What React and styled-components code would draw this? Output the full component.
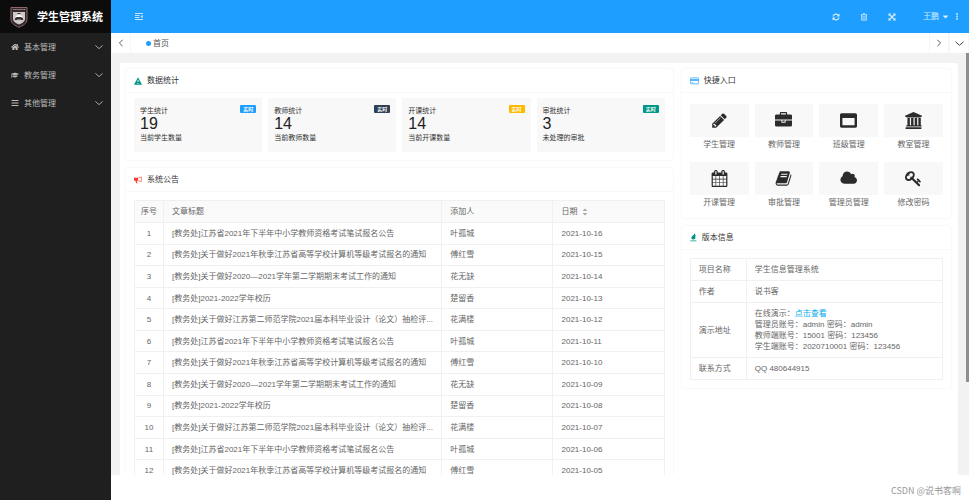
import React from "react"
import styled, {createGlobalStyle} from "styled-components"
import {
    FaBars,
    FaCaretDown,
    FaGraduationCap,
    FaHome,
} from "react-icons/fa"

const colors = {
    blue: "#1e9fff",
    side: "#1f1f1f",
    dark: "#2f4056",
    green: "#009688",
    yellow: "#ffb800",
    red: "#ff3b30",
    text: "#666",
    line: "#f0f0f0",
    tile: "#f8f8f8",
    page: "#f2f2f2",
}

const GlobalStyle = createGlobalStyle`
    * {
        box-sizing: border-box;
    }

    body {
        margin: 0;
        background: #fff;
        color: ${colors.text};
        font: 8px/11px "Liberation Sans", "Noto Sans CJK SC", sans-serif;
    }

    h1, h2, p, ul {
        margin: 0;
        padding: 0;
        font: inherit;
    }

    svg {
        display: block;
        flex: none;
    }

    button {
        padding: 0;
        border: none;
        background: none;
        color: inherit;
        font: inherit;
        cursor: pointer;
    }
`

const Shell = styled.div`
    display: flex;
    height: 100vh;
    overflow: hidden;
`

const Sidebar = styled.aside`
    flex: none;
    width: 111px;
    background: ${colors.side};
    color: #bbb;
`

const Brand = styled.div`
    display: flex;
    align-items: center;
    gap: 9px;
    height: 33px;
    padding-left: 10px;
    background: #0c0c0c;
    color: #fff;

    h1 {
        font-size: 11px;
        font-weight: 700;
        line-height: 16px;
        white-space: nowrap;
    }
`

const MenuItem = styled.button`
    display: flex;
    align-items: center;
    gap: 5px;
    width: 100%;
    height: 28px;
    padding: 0 8px 0 11px;
    text-align: left;

    span {
        flex: 1;
    }
`

const Main = styled.div`
    display: flex;
    flex: 1;
    flex-direction: column;
    min-width: 0;
`

const TopBar = styled.header`
    display: flex;
    flex: none;
    align-items: center;
    justify-content: space-between;
    height: 33px;
    padding: 0 5px 0 14px;
    background: ${colors.blue};
    color: #d5edff;
`

const Tools = styled.div`
    display: flex;
    align-items: center;
`

const ToolButton = styled.button`
    display: flex;
    align-items: center;
    justify-content: center;
    width: 28px;
    height: 33px;
`

const UserButton = styled(ToolButton)`
    justify-content: flex-end;
    gap: 2px;
    width: 44px;
`

const MoreButton = styled(ToolButton)`
    width: 14px;
`

const TabBar = styled.nav`
    display: flex;
    flex: none;
    align-items: stretch;
    height: 20px;
    color: #555;
`

const TabArrow = styled.button`
    display: flex;
    align-items: center;
    justify-content: center;
    width: 20px;
    border: solid #f6f6f6;
    border-width: 0 1px;
    color: #444;
`

const Tab = styled.a`
    display: flex;
    flex: 1;
    align-items: center;
    gap: 2px;
    padding-left: 15px;
    color: inherit;
    text-decoration: none;

    &::before {
        content: "";
        width: 5px;
        height: 5px;
        border-radius: 50%;
        background: ${colors.blue};
    }
`

const Body = styled.div`
    display: flex;
    flex: 1;
    min-height: 0;
    background: ${colors.page};
`

const Scroller = styled.main`
    flex: 1;
    min-width: 0;
    padding: 10px 8px 0 9px;
    overflow: hidden;
`

const Rail = styled.div`
    width: 3px;

    &::before {
        content: "";
        display: block;
        height: 78%;
        background: #8f8f8f;
    }
`

const Panel = styled.div`
    display: grid;
    grid-template-columns: minmax(0, 67fr) minmax(0, 33fr);
    align-items: start;
    gap: 9px;
    min-height: 100%;
    padding: 6px 7px 6px 6px;
    border-radius: 2px;
    background: #fff;
`

const Column = styled.div`
    display: grid;
    gap: 8px;
`

const Card = styled.section`
    border-radius: 2px;
    box-shadow: 0 0 2px rgba(0, 0, 0, 0.1);
`

const CardHeader = styled.header`
    display: flex;
    align-items: center;
    gap: 5px;
    height: 24px;
    padding: 0 8px;
    border-bottom: 1px solid #f8f8f8;
    color: #333;
`

const CardBody = styled.div`
    padding: ${props => props.$top || 8}px 8px 8px;
`

const Stats = styled.div`
    display: grid;
    grid-template-columns: repeat(4, 1fr);
    gap: 6px;
`

const Stat = styled.div`
    display: grid;
    grid-template-columns: 1fr auto;
    padding: 7px 6px 9px;
    background: ${colors.tile};
    color: #333;
    font-size: 7px;
    white-space: nowrap;
`

const Badge = styled.span`
    width: 16px;
    height: 8px;
    border-radius: 1px;
    background: ${props => props.$color};
    color: #fff;
    font-size: 5px;
    font-weight: 700;
    line-height: 8px;
    text-align: center;
`

const StatValue = styled.strong`
    grid-column: 1 / -1;
    color: #222;
    font-size: 16px;
    font-weight: 400;
    line-height: 16px;
`

const Shortcuts = styled.div`
    display: grid;
    grid-template-columns: repeat(4, 1fr);
    gap: 10px 6px;
`

const Shortcut = styled.a`
    color: ${colors.text};
    line-height: 15px;
    text-align: center;
    text-decoration: none;
`

const Tile = styled.span`
    display: flex;
    align-items: center;
    justify-content: center;
    height: 33px;
    background: ${colors.tile};
    color: #2b2b2b;
`

const Table = styled.table`
    width: 100%;
    border: 1px solid ${colors.line};
    border-collapse: collapse;
    table-layout: fixed;

    th, td {
        padding: 5px 0 5px 8px;
        border: 1px solid ${colors.line};
        font-weight: 400;
        text-align: left;
        white-space: nowrap;
    }
`

const NoticeTable = styled(Table)`
    height: 282px;
    border-right-color: #ddd;

    thead {
        background: #fafafa;
    }

    th, td {
        padding: 4px 0 4px 8px;
        overflow: hidden;
    }

    th {
        height: 22px;
    }

    th:first-child, td:first-child {
        padding-left: 0;
        text-align: center;
    }
`

const SortLabel = styled.button`
    display: flex;
    align-items: center;
    gap: 5px;
`

const DemoLink = styled.a`
    color: #01aaed;
    text-decoration: none;
`

const Footer = styled.footer`
    flex: none;
    height: 25px;
    padding: 0 8px;
    color: #999;
    font-family: "Noto Sans CJK SC", sans-serif;
    font-size: 9px;
    line-height: 31px;
    text-align: right;
`

// 1792-unit glyphs
const glyphs = {
    pencil: "M491 1536l91-91-235-235-91 91v107h128v128h107zm523-928q0-22-22-22-10 0-17 7l-542 542q-7 7-7 17 0 22 22 22 10 0 17-7l542-542q7-7 7-17zm-54-192l416 416-832 832h-416v-416zm683 96q0 53-37 90l-166 166-416-416 166-165q36-38 90-38 53 0 91 38l235 234q37 39 37 91z",
    briefcase: "M640 256h512v-128h-512v128zm1152 640v480q0 66-47 113t-113 47h-1472q-66 0-113-47t-47-113v-480h672v160q0 26 19 45t45 19h320q26 0 45-19t19-45v-160h672zm-768 0v128h-256v-128h256zm768-480v384h-1792v-384q0-66 47-113t113-47h352v-160q0-40 28-68t68-28h576q40 0 68 28t28 68v160h352q66 0 113 47t47 113z",
    window: "M256 1408h1280v-768h-1280v768zm1536-1120v1216q0 66-47 113t-113 47h-1472q-66 0-113-47t-47-113v-1216q0-66 47-113t113-47h1472q66 0 113 47t47 113z",
    university: "M896 0l896 384v128h-128q0 26-20 45t-48 19H196q-28 0-48-19t-20-45H0V384zM256 640h256v768h128V640h256v768h128V640h256v768h128V640h256v768h28q28 0 48 19t20 45v64H128v-64q0-26 20-45t48-19h60V640zm1404 960q28 0 48 19t20 45v128H64v-128q0-26 20-45t48-19h1528z",
    calendar: "M192 1664h288v-288h-288v288zm352 0h320v-288h-320v288zm-352-352h288v-320h-288v320zm352 0h320v-320h-320v320zm-352-384h288v-288h-288v288zm736 736h320v-288h-320v288zm-384-736h320v-288h-320v288zm768 736h288v-288h-288v288zm-384-352h320v-320h-320v320zm-352-864v-288q0-13-9.5-22.5t-22.5-9.5h-64q-13 0-22.5 9.5t-9.5 22.5v288q0 13 9.5 22.5t22.5 9.5h64q13 0 22.5-9.5t9.5-22.5zm736 864h288v-320h-288v320zm-384-384h320v-288h-320v288zm384 0h288v-288h-288v288zm32-480v-288q0-13-9.5-22.5t-22.5-9.5h-64q-13 0-22.5 9.5t-9.5 22.5v288q0 13 9.5 22.5t22.5 9.5h64q13 0 22.5-9.5t9.5-22.5zm384-64v1280q0 52-38 90t-90 38h-1408q-52 0-90-38t-38-90v-1280q0-52 38-90t90-38h128v-96q0-66 47-113t113-47h64q66 0 113 47t47 113v96h384v-96q0-66 47-113t113-47h64q66 0 113 47t47 113v96h128q52 0 90 38t38 90z",
    book: "M1703 478q40 57 18 129l-275 906q-19 64-76.500 107.500t-122.500 43.500h-923q-77 0-148.500-53.500t-99.500-131.500q-24-67-2-127 0-4 3-27t4-37q1-8-3-21.500t-3-19.500q2-11 8-21t16.500-23.500 16.500-23.500q23-38 45-91.500t30-91.500q3-10 .5-30t-.5-28q3-11 17-28t17-23q21-36 42-92t25-90q1-9-2.500-32t.5-28q4-13 22-30.500t22-22.500q19-26 42.500-84.500t27.500-96.500q1-8-3-25.500t-2-26.500q2-8 9-18t18-23 17-21q8-12 16.500-30.500t15-35 16-36 19.500-32 26.500-23.500 36-11.500 47.500 5.500l-1 3q38-9 51-9h761q74 0 114 56t18 130l-274 906q-36 119-71.500 153.500t-128.500 34.500h-869q-27 0-38 15-11 16-1 43 24 70 144 70h923q29 0 56-15.500t35-41.500l300-987q7-22 5-57 38 15 59 43zm-1064 2q-4 13 2 22.500t20 9.500h608q13 0 25.500-9.500t16.500-22.500l21-64q4-13-2-22.500t-20-9.500h-608q-13 0-25.500 9.500t-16.500 22.500zm-83 256q-4 13 2 22.500t20 9.500h608q13 0 25.500-9.500t16.500-22.500l21-64q4-13-2-22.500t-20-9.500h-608q-13 0-25.500 9.500t-16.500 22.500z",
    cloud: "M1792 1088q0 145-103 247t-247 103h-990q-168 0-288-120t-120-288q0-120 65-220t170-149q-2-25-2-39 0-193 137-329t329-137q144 0 260 80t171 209q60-56 151-56 96 0 164 68t69 165q0 68-37 126 118 27 194 122t77 218z",
    key: "M832 512q0-80-56-136t-136-56-136 56-56 136q0 42 19 83-41-19-83-19-80 0-136 56t-56 136 56 136 136 56 136-56 56-136q0-42-19-83 41 19 83 19 80 0 136-56t56-136zm851 704q0 17-49 66t-66 49q-9 0-28.500-16t-36.500-33-38.500-40-24.500-26l-96 96 220 220q28 28 28 68 0 42-39 81t-81 39q-40 0-68-28l-671-671q-176 131-365 131-163 0-265.500-102.500t-102.500-265.500q0-160 95-313t248-248 313-95q163 0 265.500 102.500t102.500 265.500q0 189-131 365l355 355 96-96q-3-3-26-24.500t-40-38.500-33-36.500-16-28.500q0-17 49-66t66-49q13 0 23 10 6 6 46 44.500t82 79.500 86.500 86 73 78 28.500 41z",
}

const Glyph = ({name}) => (
    <svg width="17" height="17" viewBox="0 0 1792 1792" fill="currentColor" aria-hidden="true">
        <path d={glyphs[name]}/>
    </svg>
)

const paths = {
    left: "M7 1 3 5l4 4",
    right: "M3 1l4 4-4 4",
    down: "M.5 3 5 7l4.500-4",
}

const Chevron = ({to, size = 8}) => (
    <svg width={size} height={size} viewBox="0 0 10 10" fill="none" stroke="currentColor" strokeWidth="1.100" aria-hidden="true">
        <path d={paths[to]}/>
    </svg>
)

const Crest = () => (
    <svg width="18" height="22" viewBox="0 0 18 22" aria-hidden="true">
        <path d="M1 1.500h16v12c0 4-4 6-8 7.800-4-1.800-8-3.800-8-7.800z" fill="#34262a" stroke="#8a6a68" strokeWidth="1"/>
        <path d="M3 3.500h12" stroke="#a98e8c" strokeWidth="1.200" strokeDasharray="1.500 .6"/>
        <path d="M3 6h12v7c0 2.500-3 4.500-6 5.500-3-1-6-3-6-5.500z" fill="#cfcaca"/>
        <path d="M4.500 13l1.500-3 3-1.500 3 1.500 1.500 3z" fill="#fff"/>
        <path d="M4.500 13.500c1-2.500 2-2.500 4.500-2.500s3.500 0 4.500 2.500l-1.500.7c-1-1-5-1-6 0zM7.500 7h3v1h-3z" fill="#3b3032"/>
    </svg>
)

const FoldIcon = () => (
    <svg width="8" height="7" viewBox="0 0 8 7" fill="none" stroke="currentColor" strokeWidth=".9" aria-hidden="true">
        <path d="M0 .5h8M0 2.500h4.500M0 4.500h4.500M0 6.500h8"/>
        <path d="M7.700 1.800v3.400L5.500 3.500z" fill="currentColor" stroke="none"/>
    </svg>
)

const RefreshIcon = () => (
    <svg width="8" height="8" viewBox="0 0 8 8" fill="none" stroke="currentColor" strokeWidth="1.200" aria-hidden="true">
        <path d="M1 3.500A3 3 0 0 1 6.500 2.500M7 4.500A3 3 0 0 1 1.500 5.500"/>
        <path d="M7.500.5v3h-3zM.5 7.500v-3h3z" fill="currentColor" stroke="none"/>
    </svg>
)

const TrashIcon = () => (
    <svg width="8" height="8" viewBox="0 0 8 8" fill="none" stroke="currentColor" strokeWidth=".8" aria-hidden="true">
        <path d="M.8 1.800h6.400M3 1.800V.8h2v1M1.600 2v5.200h4.800V2M3.100 3v3.400M4.900 3v3.400"/>
    </svg>
)

const ExpandIcon = () => (
    <svg width="8" height="8" viewBox="0 0 8 8" fill="currentColor" aria-hidden="true">
        <path d="M.5.5h2.800L.5 3.300zM7.500.5v2.800L4.700.5zM.5 7.500V4.700l2.800 2.800zM7.500 7.500H4.700l2.800-2.800z"/>
        <path d="M1.500 1.500l5 5M6.500 1.500l-5 5" stroke="currentColor" strokeWidth="1.200"/>
    </svg>
)

const MoreIcon = () => (
    <svg width="2" height="7" viewBox="0 0 2 7" fill="currentColor" aria-hidden="true">
        <circle cx="1" cy="1" r=".9"/>
        <circle cx="1" cy="3.500" r=".9"/>
        <circle cx="1" cy="6" r=".9"/>
    </svg>
)

const AlertIcon = () => (
    <svg width="8" height="8" viewBox="0 0 8 8" aria-hidden="true">
        <path d="M4 .3 8 7.700H0z" fill={colors.green}/>
        <path d="M4 3v2M4 6v.9" stroke="#fff" strokeWidth=".9"/>
    </svg>
)

const HornIcon = () => (
    <svg width="8" height="8" viewBox="0 0 8 8" aria-hidden="true">
        <path d="M0 1.800h4v3H2.800L3.500 7.200H2.200L1.400 4.800H0z" fill={colors.red}/>
        <path d="M4 2 7.400.9v4.800L4 4.600" fill="none" stroke={colors.red} strokeWidth=".6"/>
    </svg>
)

const CardIcon = () => (
    <svg width="9" height="8" viewBox="0 0 9 8" fill="none" stroke={colors.blue} aria-hidden="true">
        <rect x=".4" y=".9" width="8.200" height="6" rx=".5" strokeWidth=".7"/>
        <path d="M.5 3h8" strokeWidth="1.500"/>
        <path d="M1.500 5.500h2" strokeWidth=".6"/>
    </svg>
)

const VersionIcon = () => (
    <svg width="7" height="9" viewBox="0 0 7 9" fill={colors.green} aria-hidden="true">
        <path d="M4.200.5C6 2 6 3 5 4c1 .5.500 2-1.200 2.500C2 7 1 5.500 1.500 4c.5-1.200 2.500-1.500 2.700-3.500zM.3 7.600h6v.6h-6z"/>
    </svg>
)

const SortIcon = () => (
    <svg width="6" height="8" viewBox="0 0 6 8" fill="#aaa" aria-hidden="true">
        <path d="M3 .5 5.500 3h-5zM3 7.500.5 5h5z"/>
    </svg>
)

const menu = [
    {label: "基本管理", icon: <FaHome size={8}/>},
    {label: "教务管理", icon: <FaGraduationCap size={8}/>},
    {label: "其他管理", icon: <FaBars size={8}/>},
]

const stats = [
    {label: "学生统计", value: 19, note: "当前学生数量", color: colors.blue},
    {label: "教师统计", value: 14, note: "当前教师数量", color: colors.dark},
    {label: "开课统计", value: 14, note: "当前开课数量", color: colors.yellow},
    {label: "审批统计", value: 3, note: "未处理的审批", color: colors.green},
]

const shortcuts = [
    {label: "学生管理", icon: "pencil"},
    {label: "教师管理", icon: "briefcase"},
    {label: "班级管理", icon: "window"},
    {label: "教室管理", icon: "university"},
    {label: "开课管理", icon: "calendar"},
    {label: "审批管理", icon: "book"},
    {label: "管理员管理", icon: "cloud"},
    {label: "修改密码", icon: "key"},
]

const titles = [
    "[教务处]江苏省2021年下半年中小学教师资格考试笔试报名公告",
    "[教务处]关于做好2021年秋季江苏省高等学校计算机等级考试报名的通知",
    "[教务处]关于做好2020—2021学年第二学期期末考试工作的通知",
    "[教务处]2021-2022学年校历",
    "[教务处]关于做好江苏第二师范学院2021届本科毕业设计（论文）抽检评...",
]

const authors = ["叶孤城", "傅红雪", "花无缺", "楚留香", "花满楼"]

const notices = Array.from({length: 12}, (_, i) => ({
    id: i + 1,
    title: titles[i % 5],
    author: authors[i % 5],
    date: `2021-10-${String(16 - i).padStart(2, "0")}`,
}))

const App = () => {
    return (
        <Shell>
            <GlobalStyle/>
            <Sidebar>
                <Brand>
                    <Crest/>
                    <h1>学生管理系统</h1>
                </Brand>
                {menu.map(item => (
                    <MenuItem key={item.label}>
                        {item.icon}
                        <span>{item.label}</span>
                        <Chevron to="down"/>
                    </MenuItem>
                ))}
            </Sidebar>

            <Main>
                <TopBar>
                    <ToolButton aria-label="收起菜单"><FoldIcon/></ToolButton>
                    <Tools>
                        <ToolButton aria-label="刷新"><RefreshIcon/></ToolButton>
                        <ToolButton aria-label="清理"><TrashIcon/></ToolButton>
                        <ToolButton aria-label="全屏"><ExpandIcon/></ToolButton>
                        <UserButton>王鹏 <FaCaretDown size={9}/></UserButton>
                        <MoreButton aria-label="更多"><MoreIcon/></MoreButton>
                    </Tools>
                </TopBar>

                <TabBar>
                    <TabArrow aria-label="向左"><Chevron to="left"/></TabArrow>
                    <Tab href="#home">首页</Tab>
                    <TabArrow aria-label="向右"><Chevron to="right"/></TabArrow>
                    <TabArrow aria-label="标签操作"><Chevron to="down" size={9}/></TabArrow>
                </TabBar>

                <Body>
                    <Scroller>
                        <Panel>
                            <Column>
                                <Card>
                                    <CardHeader>
                                        <AlertIcon/>
                                        <h2>数据统计</h2>
                                    </CardHeader>
                                    <CardBody $top={5}>
                                        <Stats>
                                            {stats.map(stat => (
                                                <Stat key={stat.label}>
                                                    <p>{stat.label}</p>
                                                    <Badge $color={stat.color}>实时</Badge>
                                                    <StatValue>{stat.value}</StatValue>
                                                    <p>{stat.note}</p>
                                                </Stat>
                                            ))}
                                        </Stats>
                                    </CardBody>
                                </Card>

                                <Card>
                                    <CardHeader>
                                        <HornIcon/>
                                        <h2>系统公告</h2>
                                    </CardHeader>
                                    <CardBody>
                                        <NoticeTable>
                                            <colgroup>
                                                <col width="29"/>
                                                <col/>
                                                <col width="21%"/>
                                                <col width="21%"/>
                                            </colgroup>
                                            <thead>
                                                <tr>
                                                    <th>序号</th>
                                                    <th>文章标题</th>
                                                    <th>添加人</th>
                                                    <th><SortLabel>日期 <SortIcon/></SortLabel></th>
                                                </tr>
                                            </thead>
                                            <tbody>
                                                {notices.map(notice => (
                                                    <tr key={notice.id}>
                                                        <td>{notice.id}</td>
                                                        <td>{notice.title}</td>
                                                        <td>{notice.author}</td>
                                                        <td>{notice.date}</td>
                                                    </tr>
                                                ))}
                                            </tbody>
                                        </NoticeTable>
                                    </CardBody>
                                </Card>
                            </Column>

                            <Column>
                                <Card>
                                    <CardHeader>
                                        <CardIcon/>
                                        <h2>快捷入口</h2>
                                    </CardHeader>
                                    <CardBody $top={11}>
                                        <Shortcuts>
                                            {shortcuts.map(item => (
                                                <Shortcut key={item.label} href="#open">
                                                    <Tile><Glyph name={item.icon}/></Tile>
                                                    {item.label}
                                                </Shortcut>
                                            ))}
                                        </Shortcuts>
                                    </CardBody>
                                </Card>

                                <Card>
                                    <CardHeader>
                                        <VersionIcon/>
                                        <h2>版本信息</h2>
                                    </CardHeader>
                                    <CardBody>
                                        <Table>
                                            <colgroup>
                                                <col width="56"/>
                                                <col/>
                                            </colgroup>
                                            <tbody>
                                                <tr>
                                                    <th scope="row">项目名称</th>
                                                    <td>学生信息管理系统</td>
                                                </tr>
                                                <tr>
                                                    <th scope="row">作者</th>
                                                    <td>说书客</td>
                                                </tr>
                                                <tr>
                                                    <th scope="row">演示地址</th>
                                                    <td>
                                                        <p>在线演示：<DemoLink href="#demo">点击查看</DemoLink></p>
                                                        <p>管理员账号：admin 密码：admin</p>
                                                        <p>教师端账号：15001 密码：123456</p>
                                                        <p>学生端账号：2020710001 密码：123456</p>
                                                    </td>
                                                </tr>
                                                <tr>
                                                    <th scope="row">联系方式</th>
                                                    <td>QQ 480644915</td>
                                                </tr>
                                            </tbody>
                                        </Table>
                                    </CardBody>
                                </Card>
                            </Column>
                        </Panel>
                    </Scroller>
                    <Rail/>
                </Body>

                <Footer>CSDN @说书客啊</Footer>
            </Main>
        </Shell>
    )
}

export default App
